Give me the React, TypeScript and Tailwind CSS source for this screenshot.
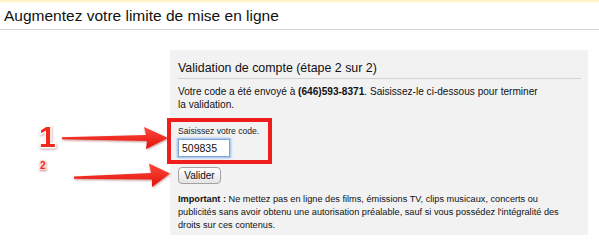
import React from 'react';

function Annotations() {
  return (
    <svg
      className="absolute left-0 top-0 pointer-events-none"
      width="599"
      height="241"
      viewBox="0 0 599 241"
    >
      <defs>
        <linearGradient id="arrowFill" x1="0" y1="0" x2="0" y2="1">
          <stop offset="0" stopColor="#ff4a3a" />
          <stop offset="1" stopColor="#e0120e" />
        </linearGradient>
        <filter id="soft" x="-20%" y="-40%" width="140%" height="180%">
          <feDropShadow dx="0.5" dy="1" stdDeviation="1" floodColor="#7a0000" floodOpacity="0.45" />
        </filter>
      </defs>

      {/* arrow 1 */}
      <path
        d="M62 137.2 L146 135 L144 127 L168 138 L146 149 L147 141 L62 139.2 Z"
        fill="url(#arrowFill)"
        filter="url(#soft)"
      />
      {/* arrow 2 */}
      <path
        d="M74 176.5 L151 173 L149 163.5 L170 173.5 L152 187 L152 179.5 L74 178.8 Z"
        fill="url(#arrowFill)"
        filter="url(#soft)"
      />

      {/* numbers */}
      <text
        x="39"
        y="147"
        fontFamily="'Liberation Sans', Arial, sans-serif"
        fontWeight="700"
        fontSize="30"
        fill="#f22a1c"
        stroke="#ffffff"
        strokeWidth="2.5"
        paintOrder="stroke"
        filter="url(#soft)"
      >
        1
      </text>
      <text
        x="40"
        y="169"
        fontFamily="'Liberation Sans', Arial, sans-serif"
        fontWeight="700"
        fontSize="10"
        fill="#f22a1c"
        stroke="#ffd6d0"
        strokeWidth="2"
        paintOrder="stroke"
        filter="url(#soft)"
      >
        2
      </text>
    </svg>
  );
}

export default function App() {
  return (
    <div className="relative w-[599px] h-[241px] overflow-hidden bg-white text-[#111] font-['Liberation_Sans',Arial,sans-serif]">
      {/* Yellow top strip */}
      <div className="h-[3px] bg-gradient-to-b from-[#fbf1c2] to-[#fffbe8]" />

      {/* Page heading */}
      <h1 className="px-[4px] pt-[3px] pb-[3px] text-[15.5px] leading-[20px] text-[#111] border-b border-[#d2d2d2]">
        Augmentez votre limite de mise en ligne
      </h1>

      {/* Validation panel */}
      <div className="mt-[20px] ml-[170px] w-[418px] bg-[#f2f2f2] pl-[8px] pr-[7px] pt-[9px] pb-[3px]">
        <h2 className="text-[12.4px] leading-[18px] pb-[1px] border-b border-[#d4d4d4] text-[#111]">
          Validation de compte (étape 2 sur 2)
        </h2>

        <p className="mt-[6px] text-[10.1px] leading-[13px] text-[#111] whitespace-nowrap">
          Votre code a été envoyé à <b>(646)593-8371</b>. Saisissez-le ci-dessous pour terminer
          <br />
          la validation.
        </p>

        {/* Highlighted code box */}
        <div className="mt-[7px] ml-[-11px] w-[105px] border-4 border-[#f01d1d] pl-[7px] pt-[3px] pb-[3px]">
          <div className="text-[8.6px] leading-[12px] text-[#222]">Saisissez votre code.</div>
          <input
            readOnly
            value="509835"
            className="mt-[2px] block w-[52px] h-[18px] bg-white border border-[#7ea6d6] shadow-[0_0_2px_1px_#8db6e8] pl-[3px] text-[10.5px] text-[#111] outline-none"
          />
        </div>

        <button className="mt-[3px] block w-[43px] h-[17px] rounded-[4px] border border-[#a3a3a3] bg-gradient-to-b from-white to-[#e4e4e4] text-[10px] leading-[15px] text-[#111]">
          Valider
        </button>

        <p className="mt-[9px] text-[9.2px] leading-[13px] text-[#111] whitespace-nowrap">
          <b>Important :</b> Ne mettez pas en ligne des films, émissions TV, clips musicaux, concerts ou
          <br />
          publicités sans avoir obtenu une autorisation préalable, sauf si vous possédez l'intégralité des
          <br />
          droits sur ces contenus.
        </p>
      </div>

      <Annotations />
    </div>
  );
}
